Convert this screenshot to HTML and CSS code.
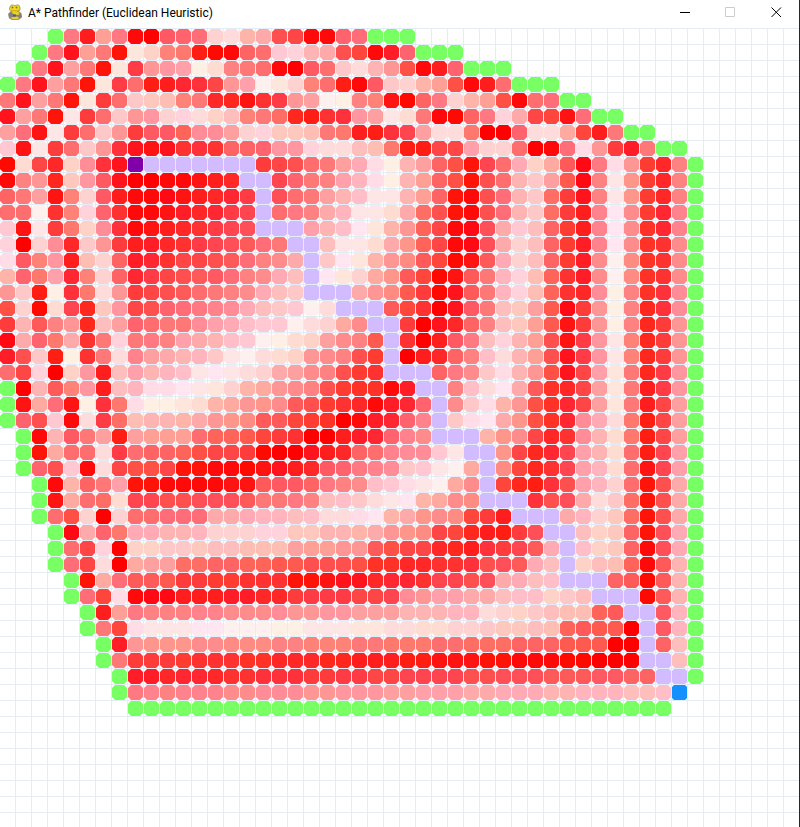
FILE: index.html
```html
<!DOCTYPE html>
<html lang="en">
<head>
<meta charset="utf-8">
<title>A* Pathfinder (Euclidean Heuristic)</title>
<link rel="stylesheet" href="styles.css">
</head>
<body>
<div class="window">
  <header class="titlebar">
    <svg class="app-icon" viewBox="0 0 16 16" aria-hidden="true">
      <path d="M3 2C4 0 6.500 0 8 1.200 9.500 0 12 0 13 2.200 14.200 4.500 13.500 6.500 12 7.500L14.500 9 15 13.500 11.500 16H5L2 14.500 1 10.500 3.500 7.500C1.500 6 2 3.500 3 2Z" fill="#a09a6c"/>
      <path d="M4 2.200C5 .8 7 1 8 2.200 9.500.8 11.500 1 12.200 2.800 13.200 5 12 6.800 10.500 7.200 8 8.200 5 7.800 3.500 6.500 2.500 5 3.200 3.200 4 2.200Z" fill="#f6dc14"/>
      <path d="M4.500 8h7l1.500 4.500-2 2.500H6L3 13Z" fill="#ead02c"/>
      <path d="M1.500 9 4.500 8l2.500 2.500 4 .5L13.500 9l1.500 3.500-2.500 2-2-2-5 .5-3 1Z" fill="#808086"/>
      <path d="M6 10.500h3v2H6Z" fill="#6a5648"/>
      <circle cx="5.500" cy="3.500" r="1" fill="#77744a"/><circle cx="9.500" cy="3.500" r="1" fill="#77744a"/>
      <path d="M4 6c2 .8 5 .8 7.500 0" stroke="#b59c18" stroke-width=".7" fill="none"/>
    </svg>
    <h1 class="title">A* Pathfinder (Euclidean Heuristic)</h1>
    <button class="control" type="button" aria-label="Minimize"><svg viewBox="0 0 11 11"><path d="M1 5.500h10"/></svg></button>
    <button class="control" type="button" aria-label="Maximize" disabled><svg viewBox="0 0 11 11"><path d="M.5.5h9v9h-9Z"/></svg></button>
    <button class="control" type="button" aria-label="Close"><svg viewBox="0 0 11 11"><path d="M.5.5l9.500 9.500M10 .5l-9.500 9.500"/></svg></button>
  </header>
  <main class="board" id="board" aria-label="Search grid"></main>
</div>
<script src="board.js"></script>
</body>
</html>
```
FILE: styles.css
```css
* { box-sizing: border-box; }

body {
  margin: 0;
  background: #fff;
  font-family: Roboto, "Noto Sans", sans-serif;
}

.window {
  display: flex;
  flex-direction: column;
  height: 100vh;
  border-right: 1px solid #26262b;
  overflow: hidden;
}

.titlebar {
  display: flex;
  flex: none;
  align-items: center;
  height: 28px;
  padding: 0 0 4px 7px;
}

.app-icon {
  width: 16px;
  height: 16px;
  margin-right: 5px;
}

.title {
  flex: 1;
  margin: 0;
  padding-top: 2px;
  color: #000;
  font-size: 12px;
  font-weight: 400;
  line-height: 16px;
  white-space: nowrap;
}

.control {
  display: grid;
  place-items: center;
  width: 46px;
  height: 24px;
  padding: 0;
  border: 0;
  background: none;
  color: #000;
}

.control:disabled { color: #ccc; }

.control svg {
  width: 11px;
  height: 11px;
  fill: none;
  stroke: currentColor;
}

.board {
  flex: 1;
  min-height: 0;
  overflow: hidden;
  padding-top: 1px;
  background-image:
    linear-gradient(to right, #e3edf7 1px, transparent 1px),
    linear-gradient(to bottom, #e3edf7 1px, transparent 1px);
  background-position: 15px 0, 0 0;
  background-size: 16px 16px;
}

.row {
  display: flex;
  gap: 1px;
  height: 15px;
  margin-bottom: 1px;
}

.cell {
  flex: none;
  width: 15px;
  height: 15px;
  background: #fff;
}

.cell span {
  --cut: 3px;
  display: block;
  height: 15px;
  clip-path: polygon(
    var(--cut) 0, calc(100% - var(--cut)) 0,
    100% var(--cut), 100% calc(100% - var(--cut)),
    calc(100% - var(--cut)) 100%, var(--cut) 100%,
    0 calc(100% - var(--cut)), 0 var(--cut)
  );
}

.cell .route { --cut: 2px; }
```
FILE: board.js
```javascript
// One character per square. Lowercase letters a-y are evenly spaced shades
// from red to white, uppercase ones lean pink, the WARM symbols lean orange.
const ROWS = [
  "   #Md9MbaJKLvw7rihbbKL###",
  "  #MC9m?24+*_%bklUVsri!bDK###",
  " #MCqm?2GpPQ13nmlbaJluwsp~bdK###",
  "#MCqm?2Gl_dEFhpQy2v+l_bJuv79~bdl###",
  "mCqm?2glu56+me,cfGpqy1n+c%kMv79~blL##",
  "Cqm?xglupPvVw4t+m/,_fFPqx3mb%kMVrh!cL##",
  "qLcxglupgJJ=OOqvV556m*d_FHqww*aaKww8!dm##",
  "UcxglupFCcCfFfkkKPPVwwt6*__hhQvvlabLWpgDm##",
  "%3he4OFC$@@@@@@@ghilmqRW1sqk~?HlR48jBMWp;en#",
  "bnp,5PJCaabbcde@@HKmnQSW1s9k~?ilsuq^Bnx0;en#",
  "kmqc+vJdbbBcdeEG@IlmqsTxxs9k?biLsu/gCnx0;en#",
  "llyf+VKfbbcDeEGH@lMnrSxx3r/i?biLsu/gdNXo;EN#",
  "Ucxg*4OFbcdefGHI@@@QsTX27p=hbBIrUtk;dNXo:EN#",
  "VavOeupgdDefGHIjLm@@txx3r0=hbBIrvtk;DNXo:fo#",
  "WJ+Pd6vkDEfhhijLnor@uX27p-j!%cjRvtk;Doy-:fo#",
  "7K*QE+vkEGhijJLnoRt@X2v80j!%cjmSV6=fDoy-:fo#",
  "pu_1F*wpghijlmnoRtu@@@rp-^g%CjmSV6=feO1n:FO#",
  "~v%3H,5PhiKLMNORtuUyw@@@j!faCJmt5q^Bgp1n,FO#",
  "gsjnp,tqKlmmOQRTUUywv8o@@gaCeknt59^cgp1n,gp#",
  "BrK*rfmVmMnQrsTUy134qon^@fadJMtVs9icGPx+,gp#",
  "Diu_1fmwNqrsSuxyw34poni;@adeknTws9iCGPx+,gp#",
  "lhVa4PdtQsSTxXxwvrqoni;f@@@kMouWsp~ChQ2m,GP#",
  "#asj+PdtSWWXx2v78poni;::bD@@nTwXrj:ehq2mdGP#",
  "#c8Lc1F*W112378p0oji;febDEK@ouW7p~:Ehq2mdhq#",
  "#KiUbwG/6ss7rp0-jj!;:abDEKN@uWXr0~:EORw*_hq#",
  " #bsJmq_q999l==^!gfaadDEKNo@@@70ohefOs3*_hq#",
  " #?8llwGlkk=~hhg%aaCdeklNOOUx@@0h,EHQs3l_HQ#",
  " #KiUbwh~~h??bb%cCdeJKMNOuUxy8@-!,fHQS3lcHQ#",
  "  #b7kmQ??bbbbccjJJkMnoTUWxy8o@!,_FiQSvl?ir#",
  "  #c8l/3HHiiIIIjmmMntTuwxX78o-@@@FiIrwu/?ir#",
  "  #l~vavllLLLrrRSStTwwWX7r0o-!gd@@@rSv5/?ir#",
  "   #BrK*RRssSvvvVV55ss7rp0-h!,d_gI@@t45k?IR#",
  "   #lhVa44uu5tt666q99ppj~hhe,dFgHjR@T45kbIR#",
  "   #Lhwa8qq//kk==^^iii~::eeffFiIjRt@4t6=bjs#",
  "    #?8Ljj^gg;;fff??cCCeEEfHHiIrRtT@@@kj%js#",
  "    #L!WbBBdddDDeegGGGhhHOpQQrrtTT4ut@@@%js#",
  "     #d9MnnnNNoooOppPPqqqsssSSwv4ut66=j@@JS#",
  "     #m!WxxxXXyyy11xxx22ww33vvu55t6=j^^a@JS#",
  "      #Dp000oo---nn+++mm***ll///kkk^^^aa@kt#",
  "      #mggg;fff::eee,,ddd__ccc??bbb%%aaa@@t#",
  "       #DDeEEeffFFFggGGhhHHHHiiIIIjjjJJkk@@#",
  "       #MNnNNNooOOOppPPPqqQQQrrRRRssSSSttT&",
  "        " + "#".repeat(34)
];
const WARM = "%?_,:;!~^=/*+-0987654321";
const FIXED = { "#": "#78ff64", "@": "#d2bbff", "$": "#8200aa", "&": "#1491ff" };

function colour(ch) {
  if (FIXED[ch]) return FIXED[ch];
  const warm = WARM.indexOf(ch);
  if (warm >= 0) return `rgb(255, ${(warm + 1) * 10}, ${warm * 10})`;
  const level = (ch.toLowerCase().charCodeAt(0) - 97) * 10;
  const blue = ch === ch.toUpperCase() ? level + 10 : level;
  return `rgb(255, ${level}, ${blue})`;
}

const board = document.getElementById("board");
for (const text of ROWS) {
  const row = document.createElement("div");
  row.className = "row";
  for (const ch of text) {
    const cell = document.createElement("div");
    cell.className = "cell";
    if (ch !== " ") {
      const fill = document.createElement("span");
      if ("@$&".includes(ch)) fill.className = "route";
      fill.style.background = colour(ch);
      cell.append(fill);
    }
    row.append(cell);
  }
  board.append(row);
}
```
